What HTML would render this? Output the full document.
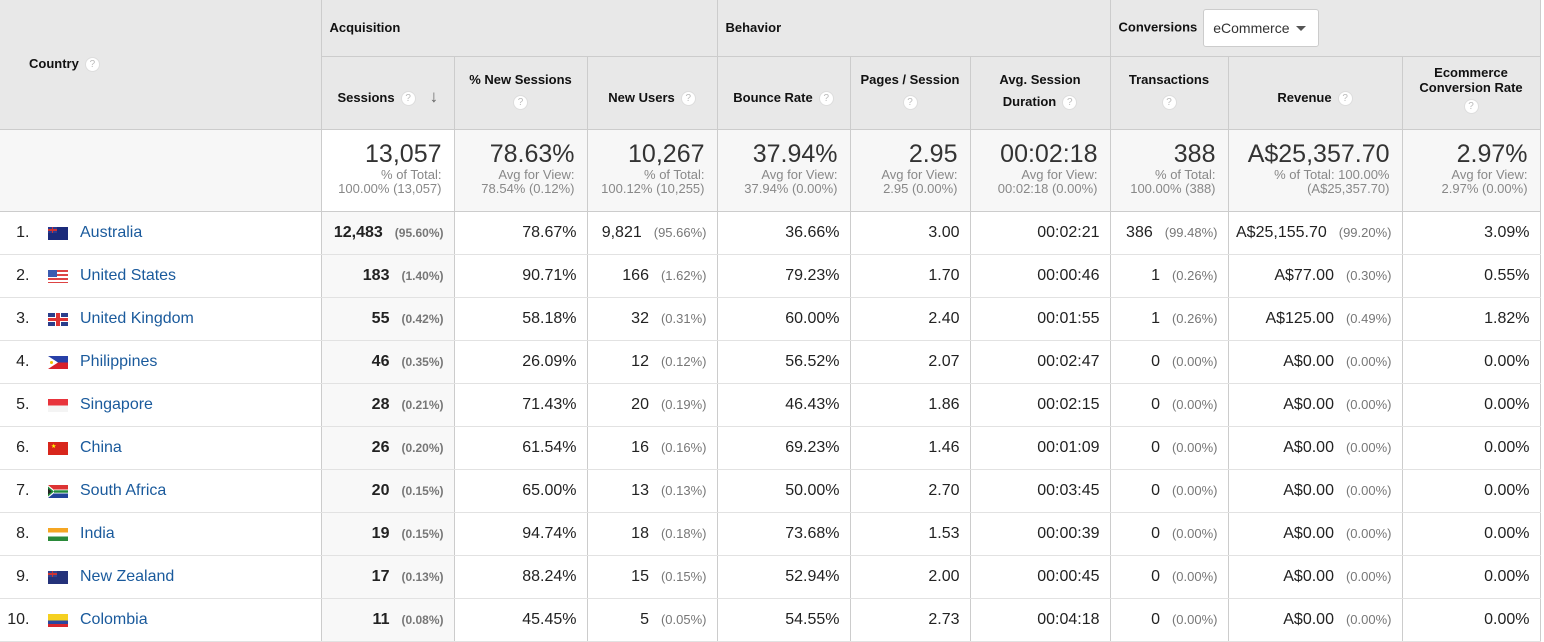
<!DOCTYPE html>
<html><head><meta charset="utf-8"><style>
*{box-sizing:border-box;margin:0;padding:0}
body{width:1544px;height:637px;overflow:hidden;background:#fff;font-family:"Liberation Sans",Arial,sans-serif;color:#222}
table{border-collapse:collapse;table-layout:fixed;width:1540px;position:absolute;left:0;top:0}
td,th{border-right:1px solid #ccc;overflow:hidden;white-space:nowrap}
th{background:#e8e8e8;font-size:13px;font-weight:bold;color:#111;border-bottom:1px solid #ccc}
.g th{height:56px;text-align:left;padding-left:8px;vertical-align:middle}
.s th{height:73px;text-align:center;vertical-align:middle;line-height:22px}
.h{display:inline-block;width:15px;height:15px;border-radius:50%;background:#fff;border:1px solid #ddd;color:#bbb;font-size:10px;line-height:13px;text-align:center;font-weight:normal;vertical-align:middle;margin-left:6px}
.tot td{height:82px;background:#f7f7f7;text-align:right;padding-right:12px;vertical-align:top;padding-top:11px;border-bottom:1px solid #ccc}
.tot td.w{background:#fff}
.big{font-size:25px;color:#333;line-height:27px}
.sub{font-size:13px;color:#888;line-height:14px}
.r td{height:43px;border-bottom:1px solid #e2e2e2;text-align:right;padding-right:10px;font-size:16px;color:#222}
.r td.ses{background:#f8f8f8}
.r td.c{text-align:left;padding:0;position:relative}
.n{position:absolute;right:291px;top:12px}
.f{position:absolute;left:48px;top:15px;width:20px;height:13px}
.l{position:absolute;left:80px;top:12px;color:#1a5a9c}
.p{font-size:13px;color:#777;margin-left:12px}
b.p{font-weight:bold;font-size:12px}
.dd{display:inline-block;margin-left:6px;width:116px;height:38px;background:#fff;border:1px solid #ccc;border-radius:3px;font-weight:normal;font-size:14px;color:#333;line-height:36px;padding-left:9px;vertical-align:middle;position:relative}
.dd:after{content:"";position:absolute;right:12px;top:16px;border:5px solid transparent;border-top:5px solid #555;border-bottom:0}
</style></head><body>
<table>
<colgroup><col style="width:321px"><col style="width:133px"><col style="width:133px"><col style="width:130px"><col style="width:133px"><col style="width:120px"><col style="width:140px"><col style="width:118px"><col style="width:174px"><col style="width:138px"></colgroup>
<tr class="g"><th rowspan="2" style="padding-left:29px;padding-top:0;border-bottom:1px solid #ccc">Country<span class="h">?</span></th><th colspan="3">Acquisition</th><th colspan="3">Behavior</th><th colspan="3">Conversions<span class="dd">eCommerce</span></th></tr>
<tr class="s">
<th style="text-align:left;padding-left:16px;padding-top:10px">Sessions<span class="h">?</span><span style="margin-left:14px;color:#666;font-size:17px">&#8595;</span></th>
<th style="vertical-align:top;padding-top:12px">% New Sessions<br><span class="h" style="margin:0">?</span></th>
<th style="padding-top:10px">New Users<span class="h">?</span></th>
<th style="padding-top:10px">Bounce Rate<span class="h">?</span></th>
<th style="vertical-align:top;padding-top:12px">Pages / Session<br><span class="h" style="margin:0">?</span></th>
<th style="vertical-align:top;padding-top:12px">Avg. Session<br>Duration<span class="h">?</span></th>
<th style="vertical-align:top;padding-top:12px">Transactions<br><span class="h" style="margin:0">?</span></th>
<th style="padding-top:10px">Revenue<span class="h">?</span></th>
<th style="vertical-align:top;padding-top:8px;line-height:15px">Ecommerce<br>Conversion Rate<br><span class="h" style="margin:4px 0 0">?</span></th>
</tr>
<tr class="tot"><td></td>
<td class="w"><div class="big">13,057</div><div class="sub">% of Total:<br>100.00% (13,057)</div></td>
<td><div class="big">78.63%</div><div class="sub">Avg for View:<br>78.54% (0.12%)</div></td>
<td><div class="big">10,267</div><div class="sub">% of Total:<br>100.12% (10,255)</div></td>
<td><div class="big">37.94%</div><div class="sub">Avg for View:<br>37.94% (0.00%)</div></td>
<td><div class="big">2.95</div><div class="sub">Avg for View:<br>2.95 (0.00%)</div></td>
<td><div class="big">00:02:18</div><div class="sub">Avg for View:<br>00:02:18 (0.00%)</div></td>
<td><div class="big">388</div><div class="sub">% of Total:<br>100.00% (388)</div></td>
<td><div class="big">A$25,357.70</div><div class="sub">% of Total: 100.00%<br>(A$25,357.70)</div></td>
<td><div class="big">2.97%</div><div class="sub">Avg for View:<br>2.97% (0.00%)</div></td>
</tr>
<tr class="r"><td class="c"><span class="n">1.</span><span class="f" style="background:#1b2a7a"><span style="position:absolute;left:0;top:0;width:9px;height:6px;background:linear-gradient(#c33,#c33) 4px 0/1px 6px no-repeat,linear-gradient(#c33,#c33) 0 2px/9px 2px no-repeat,#2a3a90"></span></span><span class="l">Australia</span></td><td class="ses"><b>12,483</b><b class="p">(95.60%)</b></td><td>78.67%</td><td>9,821<span class="p">(95.66%)</span></td><td>36.66%</td><td>3.00</td><td>00:02:21</td><td>386<span class="p">(99.48%)</span></td><td>A$25,155.70<span class="p">(99.20%)</span></td><td>3.09%</td></tr>
<tr class="r"><td class="c"><span class="n">2.</span><span class="f" style="background:linear-gradient(#3b5bb0,#3b5bb0) 0 0/9px 7px no-repeat,repeating-linear-gradient(#d44 0 2px,#fff 2px 4px)"></span><span class="l">United States</span></td><td class="ses"><b>183</b><b class="p">(1.40%)</b></td><td>90.71%</td><td>166<span class="p">(1.62%)</span></td><td>79.23%</td><td>1.70</td><td>00:00:46</td><td>1<span class="p">(0.26%)</span></td><td>A$77.00<span class="p">(0.30%)</span></td><td>0.55%</td></tr>
<tr class="r"><td class="c"><span class="n">3.</span><span class="f" style="background:linear-gradient(#d33,#d33) 8px 0/4px 13px no-repeat,linear-gradient(#d33,#d33) 0 5px/20px 3px no-repeat,linear-gradient(#fff,#fff) 7px 0/6px 13px no-repeat,linear-gradient(#fff,#fff) 0 4px/20px 5px no-repeat,#2a3e8c"></span><span class="l">United Kingdom</span></td><td class="ses"><b>55</b><b class="p">(0.42%)</b></td><td>58.18%</td><td>32<span class="p">(0.31%)</span></td><td>60.00%</td><td>2.40</td><td>00:01:55</td><td>1<span class="p">(0.26%)</span></td><td>A$125.00<span class="p">(0.49%)</span></td><td>1.82%</td></tr>
<tr class="r"><td class="c"><span class="n">4.</span><svg class="f" viewBox="0 0 20 13"><rect width="20" height="6.5" fill="#2740a8"/><rect y="6.5" width="20" height="6.5" fill="#d8202a"/><polygon points="0,0 10,6.5 0,13" fill="#fff"/><circle cx="3.5" cy="6.5" r="1.5" fill="#f2c200"/></svg><span class="l">Philippines</span></td><td class="ses"><b>46</b><b class="p">(0.35%)</b></td><td>26.09%</td><td>12<span class="p">(0.12%)</span></td><td>56.52%</td><td>2.07</td><td>00:02:47</td><td>0<span class="p">(0.00%)</span></td><td>A$0.00<span class="p">(0.00%)</span></td><td>0.00%</td></tr>
<tr class="r"><td class="c"><span class="n">5.</span><span class="f" style="background:linear-gradient(#e8343c 50%,#f4f4f4 50%)"></span><span class="l">Singapore</span></td><td class="ses"><b>28</b><b class="p">(0.21%)</b></td><td>71.43%</td><td>20<span class="p">(0.19%)</span></td><td>46.43%</td><td>1.86</td><td>00:02:15</td><td>0<span class="p">(0.00%)</span></td><td>A$0.00<span class="p">(0.00%)</span></td><td>0.00%</td></tr>
<tr class="r"><td class="c"><span class="n">6.</span><span class="f" style="background:#d8261c"><span style="position:absolute;left:3px;top:2px;color:#ff0;font-size:6px;line-height:6px">★</span></span><span class="l">China</span></td><td class="ses"><b>26</b><b class="p">(0.20%)</b></td><td>61.54%</td><td>16<span class="p">(0.16%)</span></td><td>69.23%</td><td>1.46</td><td>00:01:09</td><td>0<span class="p">(0.00%)</span></td><td>A$0.00<span class="p">(0.00%)</span></td><td>0.00%</td></tr>
<tr class="r"><td class="c"><span class="n">7.</span><svg class="f" viewBox="0 0 20 13"><rect width="20" height="6.5" fill="#d33"/><rect y="6.5" width="20" height="6.5" fill="#22449a"/><polygon points="0,0 8,6.5 0,13" fill="#fff"/><rect x="6" y="4.5" width="14" height="4" fill="#fff"/><polygon points="0,1.5 6,6.5 0,11.5" fill="#1f8a3a"/><rect x="6" y="5.3" width="14" height="2.4" fill="#1f8a3a"/><polygon points="0,3.5 3.5,6.5 0,9.5" fill="#222"/></svg><span class="l">South Africa</span></td><td class="ses"><b>20</b><b class="p">(0.15%)</b></td><td>65.00%</td><td>13<span class="p">(0.13%)</span></td><td>50.00%</td><td>2.70</td><td>00:03:45</td><td>0<span class="p">(0.00%)</span></td><td>A$0.00<span class="p">(0.00%)</span></td><td>0.00%</td></tr>
<tr class="r"><td class="c"><span class="n">8.</span><span class="f" style="background:linear-gradient(#f5a623 33%,#fff 33% 66%,#2a8a3a 66%)"></span><span class="l">India</span></td><td class="ses"><b>19</b><b class="p">(0.15%)</b></td><td>94.74%</td><td>18<span class="p">(0.18%)</span></td><td>73.68%</td><td>1.53</td><td>00:00:39</td><td>0<span class="p">(0.00%)</span></td><td>A$0.00<span class="p">(0.00%)</span></td><td>0.00%</td></tr>
<tr class="r"><td class="c"><span class="n">9.</span><span class="f" style="background:#24327a"><span style="position:absolute;left:0;top:0;width:9px;height:6px;background:linear-gradient(#c33,#c33) 4px 0/1px 6px no-repeat,linear-gradient(#c33,#c33) 0 2px/9px 2px no-repeat,#33448f"></span></span><span class="l">New Zealand</span></td><td class="ses"><b>17</b><b class="p">(0.13%)</b></td><td>88.24%</td><td>15<span class="p">(0.15%)</span></td><td>52.94%</td><td>2.00</td><td>00:00:45</td><td>0<span class="p">(0.00%)</span></td><td>A$0.00<span class="p">(0.00%)</span></td><td>0.00%</td></tr>
<tr class="r"><td class="c"><span class="n">10.</span><span class="f" style="background:linear-gradient(#f5d020 50%,#2a46a0 50% 75%,#d8262c 75%)"></span><span class="l">Colombia</span></td><td class="ses"><b>11</b><b class="p">(0.08%)</b></td><td>45.45%</td><td>5<span class="p">(0.05%)</span></td><td>54.55%</td><td>2.73</td><td>00:04:18</td><td>0<span class="p">(0.00%)</span></td><td>A$0.00<span class="p">(0.00%)</span></td><td>0.00%</td></tr>
</table>
</body></html>
